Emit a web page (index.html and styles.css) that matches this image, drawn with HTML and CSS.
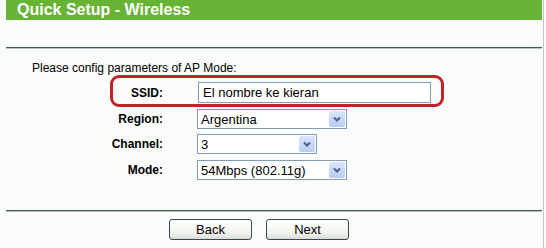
FILE: index.html
```html
<!DOCTYPE html>
<html>
<head>
<meta charset="utf-8">
<title>Quick Setup - Wireless</title>
<link rel="stylesheet" href="styles.css">
</head>
<body>
<div class="frame">
  <div class="panel">
    <div class="title">Quick Setup - Wireless</div>
    <div class="rule rule-top"></div>
    <p class="intro">Please config parameters of AP Mode:</p>
    <div class="form">
      <div class="row row-ssid">
        <span class="lbl lbl-ssid">SSID:</span>
        <div class="input">El nombre ke kieran</div>
      </div>
      <div class="row row-region">
        <span class="lbl">Region:</span>
        <div class="select w-wide"><span class="val">Argentina</span><span class="arrow"><svg width="16" height="16" viewBox="0 0 16 16"><path d="M5 6.5 L8 9.5 L11 6.5" fill="none" stroke="#4d6185" stroke-width="2"/></svg></span></div>
      </div>
      <div class="row row-channel">
        <span class="lbl">Channel:</span>
        <div class="select w-narrow"><span class="val">3</span><span class="arrow"><svg width="16" height="16" viewBox="0 0 16 16"><path d="M5 6.5 L8 9.5 L11 6.5" fill="none" stroke="#4d6185" stroke-width="2"/></svg></span></div>
      </div>
      <div class="row row-mode">
        <span class="lbl">Mode:</span>
        <div class="select w-wide"><span class="val">54Mbps (802.11g)</span><span class="arrow"><svg width="16" height="16" viewBox="0 0 16 16"><path d="M5 6.5 L8 9.5 L11 6.5" fill="none" stroke="#4d6185" stroke-width="2"/></svg></span></div>
      </div>
    </div>
    <div class="rule rule-bottom"></div>
    <div class="buttons">
      <button class="btn">Back</button>
      <button class="btn">Next</button>
    </div>
  </div>
</div>
</body>
</html>
```

FILE: styles.css
```css
html, body {
  margin: 0;
  padding: 0;
  background: #fafcfa;
  font-family: "Liberation Sans", Arial, sans-serif;
  color: #000;
}

.frame {
  width: 543px;
  height: 248px;
  border-right: 1px solid #c4c8c4;
}

.panel {
  margin-left: 6px;
  width: 536px;
}

.title {
  height: 20px;
  background: #67b334;
  color: #fff;
  font-weight: bold;
  font-size: 16px;
  line-height: 20px;
  padding-left: 11px;
}

.rule {
  height: 1px;
  background: #3f5a52;
  box-shadow: 0 1px 0 #b8c6bf;
}

.rule-top {
  margin-top: 27px;
}

.intro {
  margin: 13px 0 0 0;
  padding-left: 26px;
  font-size: 12px;
  line-height: 14px;
}

.form {
  display: flex;
  flex-direction: column;
}

.row {
  display: flex;
  align-items: center;
  margin-left: 90px;
}

.lbl {
  width: 67px;
  text-align: right;
  font-weight: bold;
  font-size: 12px;
  margin-right: 34px;
  flex: none;
}

.row-ssid {
  margin-left: 104px;
  width: 334px;
  height: 32px;
  box-sizing: border-box;
  border: 3px solid #c1232b;
  border-radius: 9px;
  padding: 4px 0 1px 0;
}

.lbl-ssid {
  width: 50px;
  margin-right: 35px;
}

.input {
  width: 233px;
  height: 21px;
  box-sizing: border-box;
  border: 1px solid #7f9db9;
  background: #fff;
  font-size: 13px;
  line-height: 19px;
  padding-left: 4px;
}

.row-region { margin-top: 2px; }
.row-channel { margin-top: 5px; }
.row-mode { margin-top: 6px; }

.select {
  height: 20px;
  box-sizing: border-box;
  border: 1px solid #7f9db9;
  background: #fff;
  font-size: 13px;
  display: flex;
  align-items: center;
  justify-content: space-between;
  padding: 0 1px 0 3px;
}

.w-wide { width: 150px; }
.w-narrow { width: 120px; }

.arrow {
  width: 16px;
  height: 16px;
  background: linear-gradient(#dbe5fd, #b7cbf5);
  border-radius: 2px;
  display: flex;
}

.rule-bottom {
  margin-top: 30px;
}

.buttons {
  display: flex;
  gap: 14px;
  padding-left: 163px;
  margin-top: 8px;
}

.btn {
  width: 83px;
  height: 21px;
  box-sizing: border-box;
  border: 1px solid #34495e;
  border-radius: 3px;
  background: linear-gradient(#ffffff, #f2f2ee 70%, #dcdcd6);
  font-family: "Liberation Sans", Arial, sans-serif;
  font-size: 13px;
  color: #000;
  padding: 0;
  line-height: 19px;
}
```
